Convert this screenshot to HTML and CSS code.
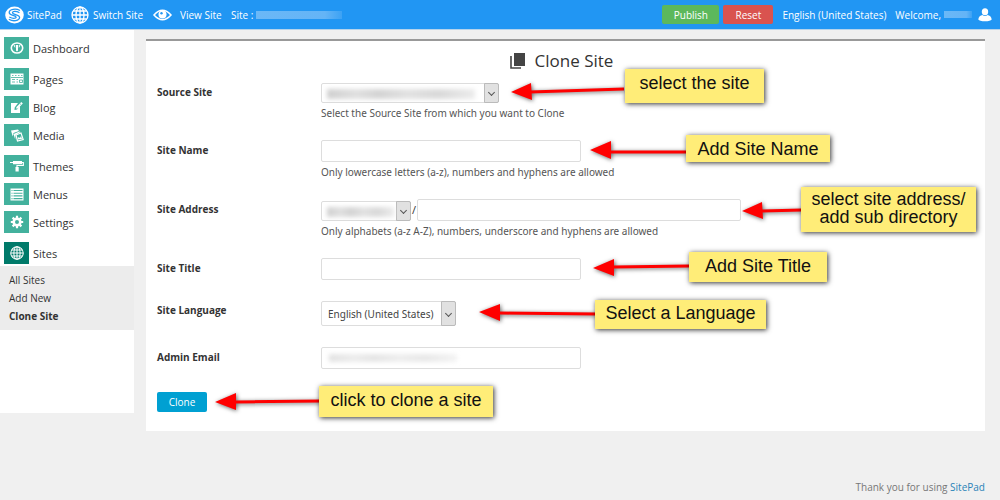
FILE: index.html
```html
<!DOCTYPE html>
<html lang="en">
<head>
<meta charset="utf-8">
<title>Clone Site</title>
<link rel="stylesheet" href="styles.css">
</head>
<body>
<svg class="defs" aria-hidden="true">
  <symbol id="globe" viewBox="0 0 18 18"><g fill="none" stroke="currentColor" stroke-width="1.3"><circle cx="9" cy="9" r="8"/><ellipse cx="9" cy="9" rx="4" ry="8"/><path d="M9 1v16M1 9h16M2.3 5h13.4M2.3 13h13.4"/></g></symbol>
</svg>
<header class="topbar">
  <a class="brand" href="#"><svg width="19" height="18" viewBox="0 0 19 18"><ellipse cx="9.500" cy="9" rx="9.300" ry="8.500" fill="#fff"/><path d="M14.500 4.300C11 2.300 4.500 3 4.200 6.300C4 9.300 8 9 10.500 10.300M14 6.500C11.500 5 7.300 5 7.500 6.800C7.800 8.800 14.600 8.300 14.600 11.300C14.500 15 8 15.600 4.300 13.500M4.800 11.300C7.500 12.800 11 12.600 11.200 11.200" fill="none" stroke="#2196f3" stroke-width="1.300" stroke-linecap="round"/></svg>SitePad</a>
  <a class="switch" href="#"><svg width="18" height="18"><use href="#globe"/></svg>Switch Site</a>
  <a class="view" href="#"><svg width="19" height="12" viewBox="0 0 19 12"><path d="M1 6Q9.500-3.500 18 6Q9.500 15.500 1 6Z" fill="none" stroke="#fff" stroke-width="1.600"/><circle cx="9.500" cy="5.600" r="4" fill="#fff"/><circle cx="8.500" cy="4.300" r="1.200" fill="#2196f3"/></svg>View Site</a>
  <span class="current">Site : <span class="mask mask-site"></span></span>
  <div class="actions">
    <button class="btn publish" type="button">Publish</button>
    <button class="btn reset" type="button">Reset</button>
  </div>
  <span class="locale">English (United States)</span>
  <span class="user">Welcome, <span class="mask mask-user"></span><svg width="14" height="14" viewBox="0 0 14 14" fill="#fff"><ellipse cx="7" cy="3.700" rx="3.200" ry="3.500"/><path d="M.3 11.500C.5 8.800 2.500 7.300 4.400 7Q7 9 9.600 7C11.500 7.300 13.500 8.800 13.700 11.500Q12.500 13.300 7 13.300T.3 11.500Z"/></svg></span>
</header>
<div class="layout">
  <nav class="sidebar">
    <a class="item" href="#"><span class="tile"><svg width="14" height="14" viewBox="0 0 14 14"><ellipse cx="7" cy="7" rx="5.700" ry="5" fill="none" stroke="#fff" stroke-width="1.600"/><path d="M6 4h2v5.500l-1 1-1-1z M3.500 4.500L5.200 4v3z M10.500 4.500L8.800 4v3z" fill="#fff"/></svg></span><span class="name">Dashboard</span></a>
    <a class="item group" href="#"><span class="tile"><svg width="14" height="12" viewBox="0 0 14 12"><path d="M.5.500h13v11H.5z" fill="#fff"/><path d="M2 2.500h1.500M5 2.500h1.500M8 2.500h1.500M11 2.500h1.500M1 4.500h12M2 6.500h3M2 9h3M6.500 6.500H8M6.500 9H8M9.500 7h3v2.500h-3z" fill="none" stroke="#43b19d" stroke-width=".8"/></svg></span><span class="name">Pages</span></a>
    <a class="item" href="#"><span class="tile"><svg width="14" height="13" viewBox="0 0 14 13"><path d="M1 2h7L4.700 6.500 4.500 9 7 8.500l3-3.500V12H1z" fill="#fff"/><path d="M6 7.500L6.500 6l4.800-5 1.500 1.400-4.800 5z" fill="#fff"/><path d="M9.800 2.500l1.500 1.400" stroke="#43b19d" stroke-width=".7"/></svg></span><span class="name">Blog</span></a>
    <a class="item" href="#"><span class="tile"><svg width="14" height="13" viewBox="0 0 14 13"><path d="M1 1.500l7-1L9 2 3.500 4 2.700 7.500z M3.500 5l6-2.500 1 .5L5.500 6l-.3 4.500z" fill="#fff"/><path d="M6 6l5-2 2.200 6.500L7.500 12z" fill="#43b19d" stroke="#fff" stroke-width="1.200"/><path d="M7.500 10.500l1-2.500 1.500 1 1-2 1 3z" fill="#fff"/></svg></span><span class="name">Media</span></a>
    <a class="item group" href="#"><span class="tile"><svg width="14" height="12" viewBox="0 0 14 12"><path d="M3 1h9v3.300H3zM5.500 7h3.200v4.500H5.500z" fill="#fff"/><path d="M0 2.500h3M12 2.500h1.300v3H7V7" fill="none" stroke="#fff" stroke-width="1.200"/></svg></span><span class="name">Themes</span></a>
    <a class="item" href="#"><span class="tile"><svg width="14" height="13" viewBox="0 0 14 13"><path d="M.5.500h13v12H.5z" fill="#fff"/><path d="M3.500 2.500h9M3.500 5.200h9M3.500 7.900h9M3.500 10.600h9M1.500 2.500h1M1.500 5.200h1M1.500 7.900h1M1.500 10.600h1" stroke="#43b19d" stroke-width="1.100"/></svg></span><span class="name">Menus</span></a>
    <a class="item" href="#"><span class="tile"><svg width="14" height="14" viewBox="0 0 14 14"><circle cx="7" cy="7" r="3.300" fill="none" stroke="#fff" stroke-width="2.600"/><path d="M7 .8v2.500M7 10.700v2.500M.8 7h2.500M10.700 7h2.500M2.600 2.600l1.800 1.800M9.600 9.600l1.800 1.800M2.600 11.400l1.800-1.800M9.600 4.400l1.800-1.800" stroke="#fff" stroke-width="2.200"/></svg></span><span class="name">Settings</span></a>
    <a class="item group active" href="#"><span class="tile"><svg width="14" height="14"><use href="#globe"/></svg></span><span class="name">Sites</span></a>
    <div class="submenu">
      <a href="#">All Sites</a>
      <a href="#">Add New</a>
      <a class="selected" href="#">Clone Site</a>
    </div>
  </nav>
  <main class="content">
    <section class="panel">
      <h1 class="title"><svg width="16" height="16" viewBox="0 0 16 16"><path d="M4 0h11v13H4z" fill="#444"/><path d="M1 3v12h10" fill="none" stroke="#444" stroke-width="1.600"/></svg>Clone Site</h1>
      <form class="form">
        <div class="row r-source">
          <label for="source">Source Site</label>
          <div class="field">
            <span class="select w-source"><select id="source"><option></option></select><span class="smudge s-source"></span></span>
            <p class="help">Select the Source Site from which you want to Clone</p>
          </div>
        </div>
        <div class="row r-name">
          <label for="name">Site Name</label>
          <div class="field">
            <input class="text" id="name" type="text">
            <p class="help">Only lowercase letters (a-z), numbers and hyphens are allowed</p>
          </div>
        </div>
        <div class="row r-address">
          <label for="address">Site Address</label>
          <div class="field">
            <div class="address"><span class="select w-domain"><select id="address"><option></option></select><span class="smudge s-domain"></span></span><span>/</span><input class="text path" type="text" aria-label="Sub directory"></div>
            <p class="help">Only alphabets (a-z A-Z), numbers, underscore and hyphens are allowed</p>
          </div>
        </div>
        <div class="row r-title">
          <label for="title">Site Title</label>
          <div class="field"><input class="text" id="title" type="text"></div>
        </div>
        <div class="row r-language">
          <label for="language">Site Language</label>
          <div class="field"><span class="select tall"><select id="language"><option>English (United States)</option></select></span></div>
        </div>
        <div class="row r-email">
          <label for="email">Admin Email</label>
          <div class="field"><span class="masked"><input class="text" id="email" type="email"><span class="smudge s-email"></span></span></div>
        </div>
        <button class="btn clone" type="button">Clone</button>
      </form>
      <div class="notes">
        <svg class="arrows" aria-hidden="true">
          <g stroke="#f00" stroke-width="3"><path d="M384 51l94-3M464 111h76M616 170l40-1M468 226l75-1M353 272l98 1M89 361l86-1"/></g>
          <g fill="#f00"><path d="M365 51l20-9 1 17zM444 109l21-9v18zM596 170l20-9 1 17zM447 227l21-9v17zM333 271l21-8v17zM69 361l21-9v17z"/></g>
        </svg>
        <p class="note n-source">select the site</p>
        <p class="note n-name">Add Site Name</p>
        <p class="note n-address">select site address/<br>add sub directory</p>
        <p class="note n-title">Add Site Title</p>
        <p class="note n-language">Select a Language</p>
        <p class="note n-clone">click to clone a site</p>
      </div>
    </section>
    <footer class="footer">Thank you for using <a href="#">SitePad</a></footer>
  </main>
</div>
</body>
</html>
```
FILE: styles.css
```css
* { box-sizing: border-box; }
body {
  margin: 0;
  background: #f0f0f0;
  color: #333;
  font: 11px/16px "Open Sans", sans-serif;
}
a { color: inherit; text-decoration: none; }
p { margin: 0; }
svg { flex: none; display: block; }
.defs { position: absolute; width: 0; height: 0; }

.topbar {
  display: flex;
  align-items: center;
  height: 30px;
  padding: 0 8px 0 5px;
  background: #2196f3;
  border-bottom: 1px solid #b5d3ec;
  color: #fff;
  font-size: 10px;
  white-space: nowrap;
}
.topbar a, .user { display: flex; align-items: center; }
.brand { gap: 3px; width: 66px; }
.switch { gap: 4px; width: 82px; }
.view { gap: 8px; width: 78px; }
.current { display: flex; align-items: center; gap: 3px; }
.mask {
  background: linear-gradient(90deg, #6bb8f7, #64b4f6 80%, #3ca2f4);
  height: 8px;
}
.mask-site { width: 86px; }
.mask-user { width: 28px; height: 7px; margin: 0 6px 0 3px; }
.actions { display: flex; gap: 4px; margin-left: auto; }
.locale { margin-left: 9px; }
.user { margin-left: 9px; }
.btn {
  border: 0;
  border-radius: 2px;
  padding: 0;
  color: #fff;
  font: inherit;
}
.publish { width: 57px; height: 19px; background: #5cb85c; }
.reset { width: 50px; height: 19px; background: #d9534f; }

.layout { display: flex; align-items: flex-start; }
.sidebar {
  flex: none;
  width: 134px;
  min-height: 383px;
  padding-top: 7px;
  background: #fff;
}
.item {
  display: flex;
  align-items: center;
  gap: 4px;
  padding-left: 4px;
  margin-bottom: 6px;
  color: #333;
}
.name { padding-top: 2px; }
.group { margin-top: 9px; }
.tile {
  display: grid;
  place-items: center;
  width: 25px;
  height: 22px;
  background: #43b19d;
  color: #fff;
}
.active { margin-bottom: 2px; }
.active .tile { background: #007a6a; }
.submenu {
  padding: 5px 9px;
  background: #ececec;
  font-size: 10px;
  line-height: 18px;
}
.submenu a { display: block; }
.selected { font-weight: 700; }

.content { flex: 1; padding: 9px 15px 0 12px; }
.panel {
  position: relative;
  min-height: 392px;
  padding: 8px 11px 0;
  background: #fff;
  border-top: 2px solid #999;
}
.title {
  display: flex;
  align-items: center;
  justify-content: center;
  gap: 9px;
  height: 24px;
  margin: 0;
  padding-right: 8px;
  font-size: 17px;
  font-weight: 400;
}
.row {
  display: grid;
  grid-template-columns: 164px 1fr;
  align-items: start;
}
.row label { font-size: 10px; font-weight: 700; line-height: 20px; }
.r-source { padding-top: 9px; height: 67px; }
.r-name { height: 59px; }
.r-address { height: 59px; }
.r-title { height: 42px; }
.r-language { height: 47px; }
.r-email { height: 45px; }
.text {
  display: block;
  width: 260px;
  height: 22px;
  border: 1px solid #ddd;
  border-radius: 2px;
  background: #fff;
  font: inherit;
}
.select { position: relative; display: block; width: 135px; height: 20px; margin-top: 1px; }
.select select {
  appearance: none;
  display: block;
  width: 100%;
  height: 100%;
  padding: 0 14px 0 6px;
  border: 1px solid #ddd;
  border-radius: 2px;
  background: #fff;
  color: #444;
  font: 10px "Noto Sans", sans-serif;
}
.select::before {
  content: "";
  position: absolute;
  top: 0;
  right: 0;
  bottom: 0;
  width: 13px;
  background: #e1e1e1;
  border: 1px solid #bbb;
  border-radius: 0 2px 2px 0;
}
.select::after {
  content: "";
  position: absolute;
  top: calc(50% - 3px);
  right: 5px;
  width: 4px;
  height: 4px;
  border: solid #555;
  border-width: 0 1px 1px 0;
  transform: rotate(45deg);
}
.tall { height: 25px; }
.w-source { width: 178px; }
.w-domain { width: 90px; }
.address { display: flex; align-items: center; gap: 1px; }
.path { width: 324px; }
.masked { position: relative; display: block; width: 260px; }
.smudge {
  position: absolute;
  top: 6px;
  left: 6px;
  height: 10px;
  background: linear-gradient(90deg, #d0d0d0, #e0e0e0 20%, #d4d4d4 35%, #e2e2e2 55%, #d9d9d9 75%, #ececec);
  filter: blur(2px);
}
.s-source { width: 148px; }
.s-domain { width: 67px; }
.s-email { top: 7px; left: 8px; width: 128px; height: 8px; opacity: .6; }
.help { padding-top: 2px; color: #555; font-family: "Noto Sans", sans-serif; font-size: 10px; }
.clone { display: block; width: 50px; height: 20px; background: #00a0d2; font-size: 10px; }

.notes { position: absolute; inset: 0; pointer-events: none; }
.arrows {
  position: absolute;
  width: 100%;
  height: 100%;
  overflow: visible;
  filter: drop-shadow(1px 1px 2px #0009);
}
.note {
  position: absolute;
  display: grid;
  place-items: center;
  padding-bottom: 3px;
  background: #ffed78;
  box-shadow: 1px 1px 5px #000c;
  color: #111;
  font: 18px/18px "Liberation Sans", Arial, sans-serif;
  text-align: center;
  white-space: nowrap;
}
.n-source { left: 479px; top: 28px; width: 139px; height: 34px; padding-bottom: 6px; }
.n-name { left: 540px; top: 94px; width: 144px; height: 27px; padding-bottom: 0; }
.n-address { left: 655px; top: 146px; width: 175px; height: 45px; }
.n-title { left: 543px; top: 211px; width: 138px; height: 30px; }
.n-language { left: 449px; top: 259px; width: 171px; height: 29px; }
.n-clone { left: 173px; top: 345px; width: 174px; height: 31px; }

.footer {
  margin-top: 48px;
  color: #777;
  font-size: 10px;
  text-align: right;
}
.footer a { color: #2a83b8; }
```
